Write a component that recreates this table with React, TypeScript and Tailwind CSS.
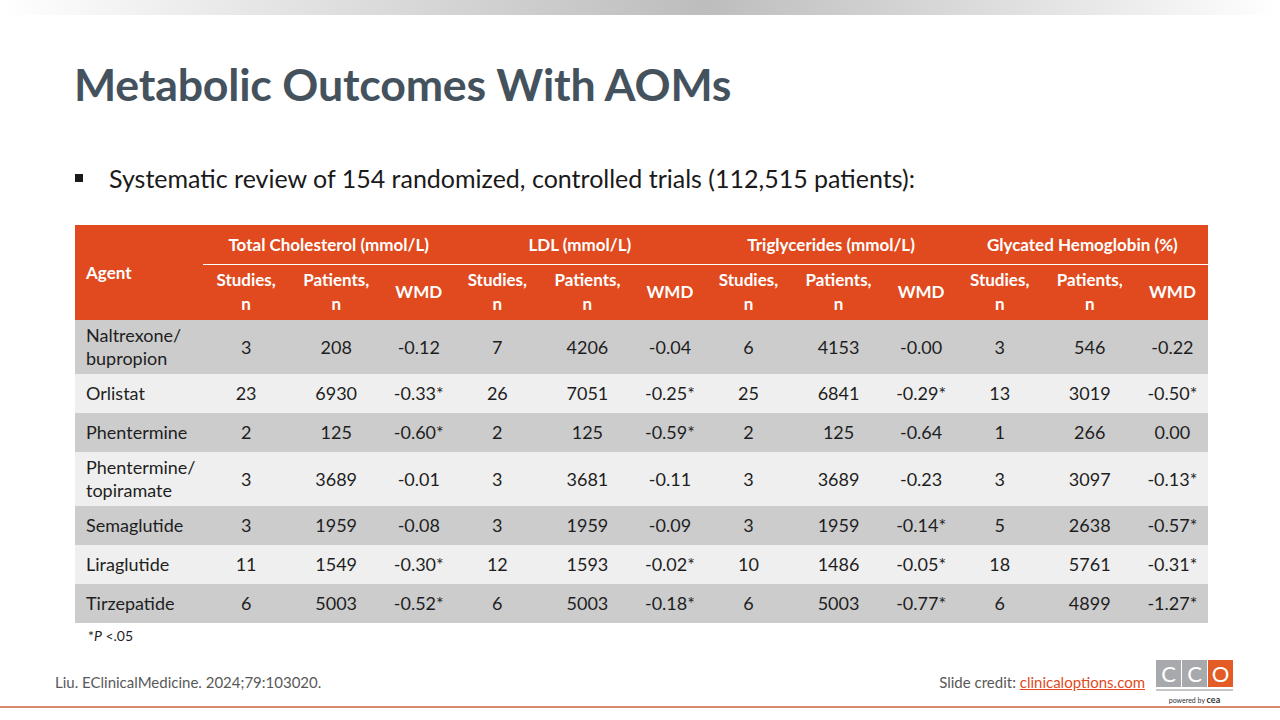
import React from 'react';

type Row = { agent: string[]; values: string[] };

const groups = [
  'Total Cholesterol (mmol/L)',
  'LDL (mmol/L)',
  'Triglycerides (mmol/L)',
  'Glycated Hemoglobin (%)',
];

const rows: Row[] = [
  { agent: ['Naltrexone/', 'bupropion'], values: ['3', '208', '-0.12', '7', '4206', '-0.04', '6', '4153', '-0.00', '3', '546', '-0.22'] },
  { agent: ['Orlistat'], values: ['23', '6930', '-0.33*', '26', '7051', '-0.25*', '25', '6841', '-0.29*', '13', '3019', '-0.50*'] },
  { agent: ['Phentermine'], values: ['2', '125', '-0.60*', '2', '125', '-0.59*', '2', '125', '-0.64', '1', '266', '0.00'] },
  { agent: ['Phentermine/', 'topiramate'], values: ['3', '3689', '-0.01', '3', '3681', '-0.11', '3', '3689', '-0.23', '3', '3097', '-0.13*'] },
  { agent: ['Semaglutide'], values: ['3', '1959', '-0.08', '3', '1959', '-0.09', '3', '1959', '-0.14*', '5', '2638', '-0.57*'] },
  { agent: ['Liraglutide'], values: ['11', '1549', '-0.30*', '12', '1593', '-0.02*', '10', '1486', '-0.05*', '18', '5761', '-0.31*'] },
  { agent: ['Tirzepatide'], values: ['6', '5003', '-0.52*', '6', '5003', '-0.18*', '6', '5003', '-0.77*', '6', '4899', '-1.27*'] },
];

const CcoLogo = () => (
  <div className="flex flex-col items-center w-[77px]">
    <div className="flex gap-[1px]">
      <div className="w-[25px] h-[27px] bg-[#a7a9ac] flex items-center justify-center text-white text-[22px] leading-none">C</div>
      <div className="w-[25px] h-[27px] bg-[#a7a9ac] flex items-center justify-center text-white text-[22px] leading-none">C</div>
      <div className="w-[25px] h-[27px] bg-[#e35b25] flex items-center justify-center text-white text-[22px] leading-none">O</div>
    </div>
    <div className="w-[77px] h-[2px] bg-[#c4c5c7] mt-[2px]" />
    <div className="text-[7px] leading-[8px] mt-[5px] text-[#333] whitespace-nowrap">
      powered by <span className="font-bold text-[9px]">cea</span>
    </div>
  </div>
);

export default function App() {
  return (
    <div className="w-[1280px] h-[720px] bg-white relative overflow-hidden flex flex-col" style={{ fontFamily: 'Lato, "Open Sans", sans-serif' }}>
      <div className="h-[15px] w-full bg-[linear-gradient(90deg,#ffffff_0%,#e6e6e6_20%,#bdbdbd_55%,#e8e8e8_85%,#ffffff_100%)]" />

      <h1 className="ml-[74px] mt-[42px] text-[44.7px] leading-[54px] font-bold text-[#44525e] tracking-[-0.2px]">
        Metabolic Outcomes With AOMs
      </h1>

      <div className="ml-[75px] mt-[51px] flex items-center text-[25px] leading-[32px] text-[#1a1a1a]">
        <span className="w-[8px] h-[8px] bg-[#1a1a1a] mr-[26px]" />
        <span>Systematic review of 154 randomized, controlled trials (112,515 patients):</span>
      </div>

      <table className="ml-[75px] mt-[31px] w-[1133px] table-fixed border-collapse text-[18px] text-[#1e1e1e]">
        <colgroup>
          <col className="w-[128px]" />
          {groups.map((g) => (
            <React.Fragment key={g}>
              <col className="w-[86px]" />
              <col className="w-[94px]" />
              <col className="w-[71px]" />
            </React.Fragment>
          ))}
        </colgroup>
        <thead className="bg-[#e04a1e] text-white font-bold text-[17px]">
          <tr className="h-[39px]">
            <th rowSpan={2} className="text-left pl-[11px] font-bold">Agent</th>
            {groups.map((g) => (
              <th key={g} colSpan={3} className="font-bold border-b border-white whitespace-nowrap">{g}</th>
            ))}
          </tr>
          <tr className="h-[56px] leading-[24px]">
            {groups.map((g) => (
              <React.Fragment key={g}>
                <th className="font-bold">Studies,<br />n</th>
                <th className="font-bold">Patients,<br />n</th>
                <th className="font-bold">WMD</th>
              </React.Fragment>
            ))}
          </tr>
        </thead>
        <tbody>
          {rows.map((r, i) => (
            <tr
              key={r.agent.join('')}
              className={`${r.agent.length > 1 ? 'h-[54px]' : 'h-[39px]'} ${i % 2 === 0 ? 'bg-[#cccccd]' : 'bg-[#efefef]'}`}
            >
              <td className="pl-[11px] leading-[23px] whitespace-nowrap">
                {r.agent.map((a) => (
                  <div key={a}>{a}</div>
                ))}
              </td>
              {r.values.map((v, j) => (
                <td key={j} className="text-center">{v}</td>
              ))}
            </tr>
          ))}
        </tbody>
      </table>

      <div className="ml-[88px] mt-[2px] text-[14px] text-[#1e1e1e]">
        *<span className="italic">P</span> &lt;.05
      </div>

      <div className="mt-auto mb-[16px] flex items-end justify-between pl-[55px] pr-[47px]">
        <div className="text-[15px] text-[#595959] mb-[11px]">Liu. EClinicalMedicine. 2024;79:103020.</div>
        <div className="flex items-end gap-[11px]">
          <div className="text-[15px] text-[#595959] mb-[11px]">
            Slide credit: <span className="text-[#e04a1e] underline">clinicaloptions.com</span>
          </div>
          <CcoLogo />
        </div>
      </div>
      <div className="absolute left-0 right-0 top-[706px] h-[2px] bg-[#d9896b]" />
    </div>
  );
}
